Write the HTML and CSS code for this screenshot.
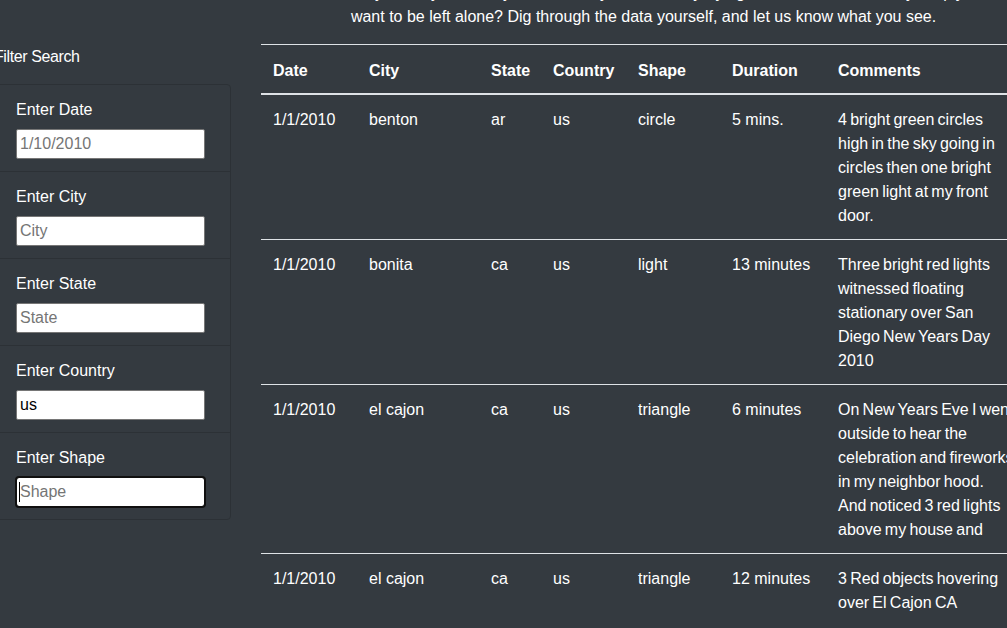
FILE: index.html
```html
<!DOCTYPE html>
<html lang="en">
<head>
<meta charset="utf-8">
<title>UFO Sightings</title>
<link rel="stylesheet" href="styles.css">
</head>
<body>
<div class="page">
  <aside class="sidebar">
    <h5 class="filter-title">Filter Search</h5>
    <ul class="well">
      <li class="filter">
        <label class="filter-label" for="datetime">Enter Date</label>
        <input class="filter-input" id="datetime" type="text" placeholder="1/10/2010">
      </li>
      <li class="filter">
        <label class="filter-label" for="city">Enter City</label>
        <input class="filter-input" id="city" type="text" placeholder="City">
      </li>
      <li class="filter">
        <label class="filter-label" for="state">Enter State</label>
        <input class="filter-input" id="state" type="text" placeholder="State">
      </li>
      <li class="filter">
        <label class="filter-label" for="country">Enter Country</label>
        <input class="filter-input" id="country" type="text" value="us">
      </li>
      <li class="filter">
        <label class="filter-label" for="shape">Enter Shape</label>
        <span class="input-wrap">
          <input class="filter-input focused" id="shape" type="text" placeholder="Shape">
          <span class="caret"></span>
        </span>
      </li>
    </ul>
  </aside>
  <main class="content">
    <p class="intro">Are they friendly? Are they here to study us? Are they trying to reach out, or do they simply<br>want to be left alone? Dig through the data yourself, and let us know what you see.</p>
    <table class="ufo-table">
      <colgroup>
        <col class="c-date"><col class="c-city"><col class="c-state"><col class="c-country"><col class="c-shape"><col class="c-duration"><col class="c-comments">
      </colgroup>
      <thead>
        <tr>
          <th>Date</th><th>City</th><th>State</th><th>Country</th><th>Shape</th><th>Duration</th><th>Comments</th>
        </tr>
      </thead>
      <tbody>
        <tr>
          <td>1/1/2010</td><td>benton</td><td>ar</td><td>us</td><td>circle</td><td>5 mins.</td>
          <td class="comment">4 bright green circles high in the sky going in circles then one bright green light at my front door.</td>
        </tr>
        <tr>
          <td>1/1/2010</td><td>bonita</td><td>ca</td><td>us</td><td>light</td><td>13 minutes</td>
          <td class="comment">Three bright red lights witnessed floating stationary over San Diego New Years Day 2010</td>
        </tr>
        <tr>
          <td>1/1/2010</td><td>el cajon</td><td>ca</td><td>us</td><td>triangle</td><td>6 minutes</td>
          <td class="comment">On New Years Eve I went outside to hear the celebration and fireworks in my neighbor hood. And noticed 3 red lights above my house and</td>
        </tr>
        <tr>
          <td>1/1/2010</td><td>el cajon</td><td>ca</td><td>us</td><td>triangle</td><td>12 minutes</td>
          <td class="comment">3 Red objects hovering over El Cajon CA</td>
        </tr>
      </tbody>
    </table>
  </main>
</div>
</body>
</html>
```
FILE: styles.css
```css
html, body {
  margin: 0;
  padding: 0;
  background: #343a40;
  overflow: hidden;
}

body {
  font-family: "Liberation Sans", Arial, sans-serif;
  font-size: 16px;
  line-height: 24px;
  color: #ffffff;
}

.page {
  display: flex;
  align-items: flex-start;
  gap: 30px;
  margin-top: -19px;
  margin-left: -4px;
  width: 1060px;
}

.sidebar {
  flex: 0 0 235px;
  padding-top: 64px;
}

.filter-title {
  margin: 0 0 15px -2px;
  font-size: 16px;
  font-weight: normal;
  line-height: 24px;
  letter-spacing: -0.4px;
}

.well {
  list-style: none;
  margin: 0;
  padding: 0;
  border: 1px solid #2c3136;
  border-radius: 4px;
}

.filter {
  padding: 13px 19px 12px;
  border-top: 1px solid #2c3136;
}

.filter:first-child {
  border-top: none;
}

.filter-label {
  display: block;
  margin-bottom: 7px;
  line-height: 24px;
}

.filter-input {
  display: block;
  box-sizing: border-box;
  width: 189px;
  height: 30px;
  margin: 0;
  padding: 0 3px;
  border: 1px solid #767676;
  border-radius: 2px;
  background: #ffffff;
  color: #000000;
  font-family: "Liberation Sans", Arial, sans-serif;
  font-size: 16px;
}

.filter-input::placeholder {
  color: #757575;
}

.filter-input.focused {
  outline: 2px solid #101010;
  outline-offset: -1px;
  border-radius: 3px;
}

.input-wrap {
  position: relative;
  display: block;
}

.caret {
  position: absolute;
  left: 3px;
  top: 5px;
  width: 1px;
  height: 20px;
  background: #000000;
}

.content {
  flex: 0 0 763px;
}

.intro {
  margin: 0 0 15px;
  text-align: center;
  line-height: 24px;
}

.ufo-table {
  width: 765.1px;
  table-layout: fixed;
  border-collapse: collapse;
  color: #ffffff;
}

.c-date { width: 96px; }
.c-city { width: 122px; }
.c-state { width: 62px; }
.c-country { width: 85px; }
.c-shape { width: 94px; }
.c-duration { width: 106px; }
.c-comments { width: 200.1px; }

.ufo-table th,
.ufo-table td {
  padding: 13px 12px 11px;
  text-align: left;
  vertical-align: top;
  border-top: 1px solid #dee2e6;
  line-height: 24px;
}

.ufo-table thead th {
  font-weight: bold;
  padding-top: 14px;
  padding-bottom: 10px;
  border-bottom: 2px solid #dee2e6;
}

.ufo-table td.comment {
  word-spacing: -1.2px;
}
```
